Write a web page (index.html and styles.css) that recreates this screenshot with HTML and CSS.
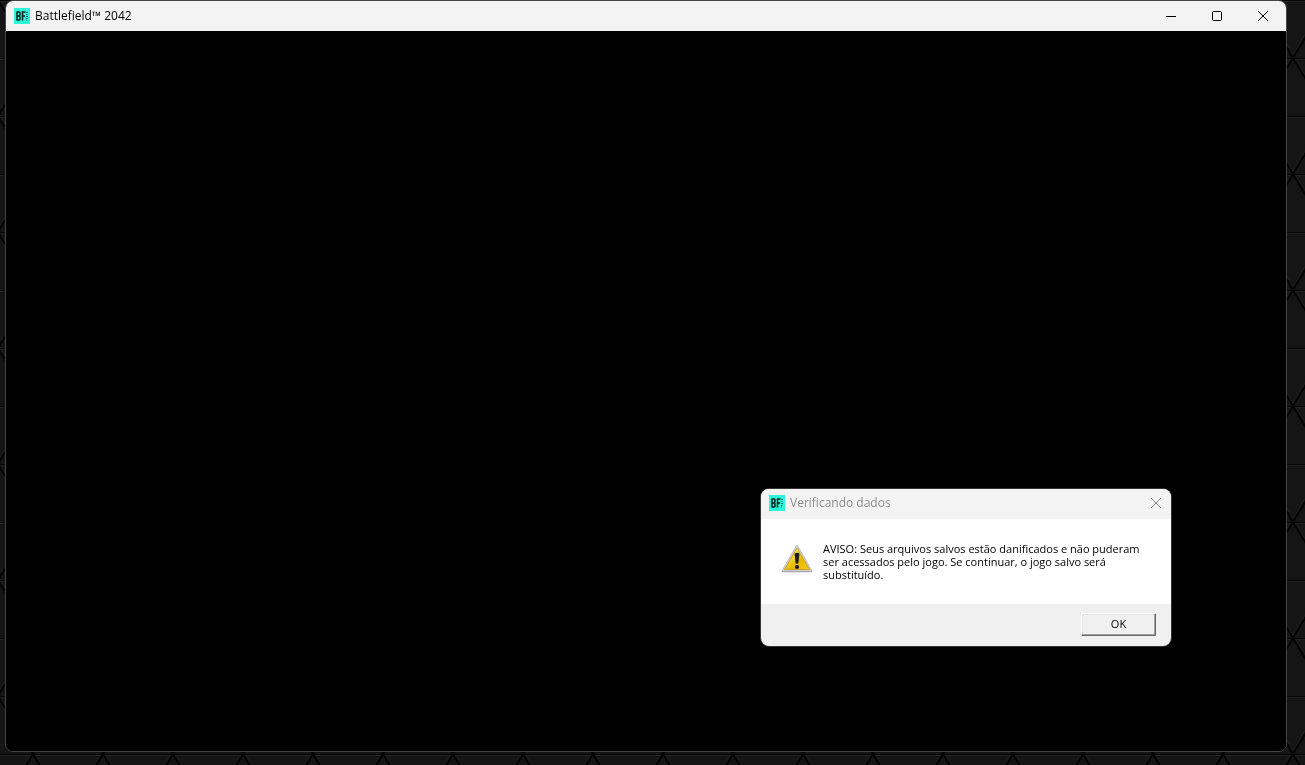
FILE: index.html
```html
<!DOCTYPE html>
<html lang="pt-BR">
<head>
<meta charset="utf-8">
<title>Battlefield™ 2042</title>
<link rel="stylesheet" href="styles.css">
</head>
<body>
<svg class="wallpaper" aria-hidden="true">
  <defs>
    <pattern id="tri" x="33" y="58" width="70" height="116" patternUnits="userSpaceOnUse">
      <rect width="70" height="116" fill="#151515"/>
      <path d="M0 1.500H70M0 59.500H70" stroke="#222222" fill="none"/>
      <path d="M2 0L72 116M68 0L-2 116" stroke="#1e1e1e" fill="none"/>
      <path d="M0 .5H70M0 58.500H70" stroke="#050505" fill="none"/>
      <path d="M-3 -5L73 121M73 -5L-3 121" stroke="#020202" stroke-width="2" fill="none"/>
    </pattern>
  </defs>
  <rect width="100%" height="100%" fill="url(#tri)"/>
</svg>
<svg class="defs" aria-hidden="true">
  <symbol id="bf" viewBox="0 0 16 16">
    <rect width="16" height="16" fill="#2df5d7"/>
    <path d="M3 3.500v9M3 4h2q1 0 1 1v1.500q0 1-1 1.500H3.500H5q1 .5 1 1.500v1.500q0 1-1 1H3M8.500 12.500V3.500M8 4h3.500M8 8h3" fill="none" stroke="#06201f" stroke-width="1.500"/>
    <path d="M12 4.500h2M12 6.500h1.500M12 8.500h2M12 10.500h1.500M12 12h1" fill="none" stroke="#12776d"/>
  </symbol>
</svg>
<main class="desktop">
  <section class="window">
    <header class="titlebar">
      <svg class="app-icon"><use href="#bf"/></svg>
      <h1 class="title">Battlefield™ 2042</h1>
      <button class="caption" aria-label="Minimizar"><svg viewBox="0 0 12 12"><path d="M1 6.500H11"/></svg></button>
      <button class="caption" aria-label="Maximizar"><svg viewBox="0 0 12 12"><rect x="1.500" y="1.500" width="9" height="9" rx="1"/></svg></button>
      <button class="caption" aria-label="Fechar"><svg viewBox="0 0 12 12"><path d="M1 1L11 11M11 1L1 11"/></svg></button>
    </header>
    <div class="canvas"></div>
  </section>
</main>
<section class="dialog" role="alertdialog" aria-labelledby="dt" aria-describedby="dm">
  <header class="titlebar titlebar-inactive">
    <svg class="app-icon"><use href="#bf"/></svg>
    <h2 class="title" id="dt">Verificando dados</h2>
    <button class="caption caption-small" aria-label="Fechar"><svg viewBox="0 0 12 12"><path d="M1 1L11 11M11 1L1 11"/></svg></button>
  </header>
  <div class="message">
    <svg class="warning" viewBox="0 0 32 32" aria-hidden="true">
      <defs>
        <linearGradient id="gold" x1="0" y1="0" x2="1" y2="1">
          <stop offset="0" stop-color="#fff08a"/><stop offset=".4" stop-color="#f3d32a"/>
          <stop offset=".6" stop-color="#e9b800"/><stop offset="1" stop-color="#f7c918"/>
        </linearGradient>
      </defs>
      <path d="M16 4.500L30 29H2Z" fill="#9c9c9c" stroke="#9c9c9c" stroke-width="2.500" stroke-linejoin="round"/>
      <path d="M16 4.500L30 28.500H2Z" fill="#d0d0d0" stroke="#d0d0d0" stroke-width="1.500" stroke-linejoin="round"/>
      <path d="M16 6L28.500 27.500H3.500Z" fill="url(#gold)" stroke="#c79a12" stroke-width=".8" stroke-linejoin="round"/>
      <path d="M13.500 11.500q2.500-1.500 5 0l-1.200 10h-2.600Z" fill="#1d1a10"/>
      <circle cx="16" cy="25" r="2.100" fill="#1d1a10"/>
    </svg>
    <p class="text" id="dm">AVISO: Seus arquivos salvos estão danificados e não puderam ser acessados pelo jogo. Se continuar, o jogo salvo será substituído.</p>
  </div>
  <footer class="actions"><button class="ok">OK</button></footer>
</section>
</body>
</html>
```
FILE: styles.css
```css
* { box-sizing: border-box; }
body {
  margin: 0;
  background: #151515;
  color: #000;
  font-family: "Open Sans", "Noto Sans", sans-serif;
  overflow: hidden;
}
.wallpaper {
  position: fixed;
  inset: 0;
  width: 100%;
  height: 100%;
  z-index: -1;
}
.defs { position: absolute; width: 0; height: 0; }
.desktop {
  display: flex;
  min-height: 100vh;
  padding: 0 18px 13px 5px;
}
.window {
  flex: 1;
  display: flex;
  flex-direction: column;
  border: 1px solid #444;
  border-radius: 8px;
  background: #000;
  overflow: hidden;
}
.canvas { flex: 1; background: #000; }
.titlebar {
  display: flex;
  align-items: center;
  height: 30px;
  padding-left: 8px;
  background: #f3f3f3;
  color: #000;
}
.titlebar-inactive {
  padding-bottom: 2px;
  color: #8c8c8c;
}
.app-icon { width: 16px; height: 16px; margin-right: 5px; }
.title {
  flex: 1;
  margin: 0;
  font-size: 12px;
  line-height: 16px;
  font-weight: 400;
}
.caption {
  display: grid;
  place-items: center;
  width: 46px;
  height: 30px;
  padding: 0;
  border: 0;
  background: none;
  color: inherit;
}
.caption-small { width: 30px; }
.caption svg {
  width: 12px;
  height: 12px;
  fill: none;
  stroke: currentColor;
}
.dialog {
  position: absolute;
  right: 134px;
  bottom: 119px;
  width: 410px;
  border-radius: 8px;
  background: #f0f0f0;
  box-shadow: 0 0 0 1px #333;
  overflow: hidden;
}
.message {
  display: flex;
  gap: 10px;
  padding: 23px 20px;
  background: #fff;
}
.warning { flex: none; width: 32px; height: 32px; }
.text {
  margin: 0;
  font-size: 11px;
  line-height: 13px;
}
.actions {
  display: flex;
  justify-content: flex-end;
  padding: 9px 15px 10px;
}
.ok {
  width: 75px;
  height: 23px;
  padding: 0 0 2px;
  border: 1px solid;
  border-color: #fff #696969 #696969 #fff;
  box-shadow: inset -1px -1px #a0a0a0, inset 1px 1px #e3e3e3;
  background: #f0f0f0;
  color: #000;
  font: 11px/13px "Open Sans", "Noto Sans", sans-serif;
}
```
